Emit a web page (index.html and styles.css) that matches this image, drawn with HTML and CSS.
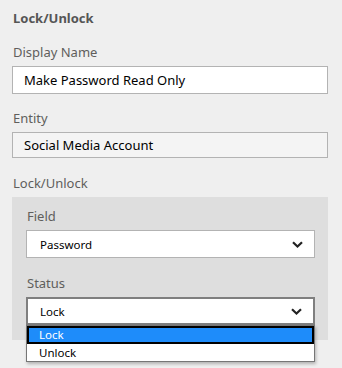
FILE: index.html
```html
<!DOCTYPE html>
<html>
<head>
<meta charset="utf-8">
<link rel="stylesheet" href="styles.css">
</head>
<body>
<div class="pane">
  <div class="title">Lock/Unlock</div>
  <div class="field">
    <div class="label">Display Name</div>
    <div class="input">Make Password Read Only</div>
  </div>
  <div class="field">
    <div class="label">Entity</div>
    <div class="input readonly">Social Media Account</div>
  </div>
  <div class="field lock">
    <div class="label">Lock/Unlock</div>
    <div class="group">
      <div class="field">
        <div class="label">Field</div>
        <div class="select">
          <span>Password</span>
          <svg class="chev" width="11" height="7" viewBox="0 0 11 7"><path d="M1 1.2 L5.5 5.5 L10 1.2" fill="none" stroke="#222" stroke-width="2.2"/></svg>
        </div>
      </div>
      <div class="field">
        <div class="label">Status</div>
        <div class="select focused">
          <span>Lock</span>
          <svg class="chev" width="11" height="7" viewBox="0 0 11 7"><path d="M1 1.2 L5.5 5.5 L10 1.2" fill="none" stroke="#222" stroke-width="2.2"/></svg>
          <div class="dropdown">
            <div class="option selected">Lock</div>
            <div class="option">Unlock</div>
          </div>
        </div>
      </div>
    </div>
  </div>
</div>
</body>
</html>
```
FILE: styles.css
```css
html, body {
  margin: 0;
  padding: 0;
  background: #efefef;
}
body {
  font-family: "Noto Sans", "Open Sans", sans-serif;
  font-size: 13px;
  color: #000;
}
.pane {
  padding: 8px 14px 40px 12px;
  display: flex;
  flex-direction: column;
  gap: 14px;
}
.title {
  font-weight: bold;
  color: #555;
  line-height: 20px;
  padding-left: 1px;
}
.field {
  display: flex;
  flex-direction: column;
  gap: 4px;
}
.field.lock {
  margin-top: 1px;
}
.label {
  color: #605e5c;
  line-height: 20px;
  padding-left: 1px;
}
.input {
  height: 26px;
  border: 1px solid #b3b3b3;
  background: #fff;
  display: flex;
  align-items: center;
  padding-left: 11px;
  line-height: 20px;
}
.input.readonly {
  height: 24px;
  background: #f4f4f4;
}
.group {
  background: #dedede;
  padding: 9px 13px 15px 14px;
  display: flex;
  flex-direction: column;
  gap: 15px;
}
.select {
  position: relative;
  height: 26px;
  border: 1px solid #b3b3b3;
  background: #fff;
  display: flex;
  align-items: center;
  justify-content: space-between;
  padding: 0 11px 0 13px;
  font-size: 11.5px;
}
.select.focused {
  height: 24px;
  border: 2px solid #7f7f7f;
  padding-left: 12px;
}
.chev {
  display: block;
}
.dropdown {
  position: absolute;
  left: -2px;
  right: -2px;
  top: 100%;
  margin-top: 2px;
  background: #fff;
  border: 1px solid #767676;
  box-shadow: 1px 2px 3px rgba(0,0,0,0.25);
  font-size: 11.5px;
  z-index: 2;
}
.option {
  height: 17px;
  line-height: 17px;
  padding-left: 12px;
}
.option.selected {
  background: #1e8cfa;
  color: #fff;
  outline: 2px solid #000;
  outline-offset: -2px;
  height: 18px;
  line-height: 18px;
}
```
